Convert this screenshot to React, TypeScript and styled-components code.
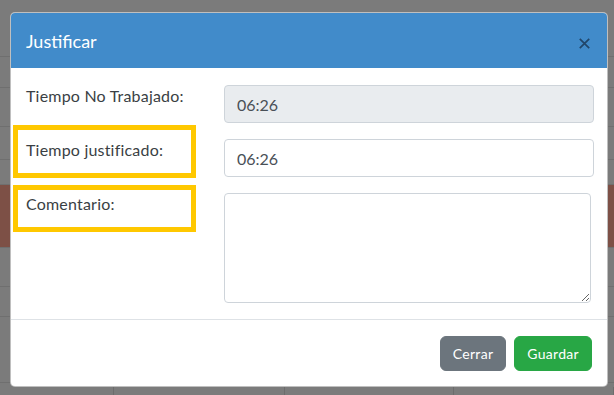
import React from 'react'
import styled, { createGlobalStyle } from 'styled-components'

const GlobalStyle = createGlobalStyle`
  html, body {
    margin: 0;
    padding: 0;
    background: #7b7b7b;
    font-family: Lato, 'Open Sans', sans-serif;
  }
  * {
    box-sizing: border-box;
  }
`

// rows of the page that sits behind the backdrop
const bgRows = [
  { h: 57 },
  { h: 31 },
  { h: 39 },
  { h: 33 },
  { h: 25 },
  { h: 63, red: true },
  { h: 39 },
  { h: 30 },
  { h: 66 },
]

const App: React.FC = () => (
  <>
    <GlobalStyle />
    <Page>
      <BgTable>
        {bgRows.map((row, i) => (
          <BgRow key={i} $height={row.h} $red={row.red} />
        ))}
        <BgCells>
          <BgCell $width={114} />
          <BgCell $width={171} />
          <BgCell $width={169} />
          <BgCell $width={160} />
        </BgCells>
      </BgTable>

      <Modal>
        <Header>
          <Title>Justificar</Title>
          <CloseButton aria-label="Close">
            <svg width="11" height="11" viewBox="0 0 11 11">
              <path d="M0.8 0.8 L10.2 10.2 M10.2 0.8 L0.8 10.2" stroke="#21466a" strokeWidth="1.7" fill="none" />
            </svg>
          </CloseButton>
        </Header>

        <Body>
          <Label>Tiempo No Trabajado:</Label>
          <Input value="06:26" disabled readOnly />

          <Label $boxed $boxTop={-13} $boxHeight={43}>Tiempo justificado:</Label>
          <Input defaultValue="06:26" />

          <Label $boxed $boxTop={-7} $boxHeight={37}>Comentario:</Label>
          <TextArea />
        </Body>

        <Footer>
          <Button $color="#6c757d">Cerrar</Button>
          <Button $color="#28a745">Guardar</Button>
        </Footer>
      </Modal>
    </Page>
  </>
)

export default App

const Page = styled.div`
  position: relative;
  width: 614px;
  height: 395px;
  overflow: hidden;
`
const BgTable = styled.div`
  display: flex;
  flex-direction: column;
`
const BgRow = styled.div<{ $height: number; $red?: boolean }>`
  height: ${(p) => p.$height}px;
  background: ${(p) => (p.$red ? '#7d5046' : '#7b7b7b')};
  border-bottom: 1px solid #6f6f6f;
`
const BgCells = styled.div`
  display: flex;
  height: 20px;
`
const BgCell = styled.div<{ $width: number }>`
  width: ${(p) => p.$width}px;
  border-right: 1px solid #6c6c6c;
  margin-top: 4px;
`
const Modal = styled.div`
  position: absolute;
  top: 12px;
  left: 10px;
  width: 598px;
  background: #fff;
  border: 1px solid rgba(0, 0, 0, 0.25);
  border-radius: 5px;
  overflow: hidden;
`
const Header = styled.div`
  display: flex;
  align-items: center;
  justify-content: space-between;
  height: 55px;
  padding: 0 17px 0 15px;
  background: #418bca;
`
const Title = styled.h5`
  margin: 0;
  font-size: 18px;
  font-weight: 400;
  line-height: 24px;
  color: #fff;
`
const CloseButton = styled.button`
  display: flex;
  padding: 0;
  margin-top: 5px;
  border: 0;
  background: transparent;
  cursor: pointer;
`
const Body = styled.div`
  display: grid;
  grid-template-columns: 198px 1fr;
  row-gap: 16px;
  padding: 17px 13px 16px 15px;
  border-bottom: 1px solid #dee2e6;
`
const Label = styled.label<{ $boxed?: boolean; $boxTop?: number; $boxHeight?: number }>`
  position: relative;
  margin-top: -1px;
  font-size: 16px;
  line-height: 24px;
  letter-spacing: 0.2px;
  color: #3a3f44;

  &::after {
    content: '';
    display: ${(p) => (p.$boxed ? 'block' : 'none')};
    position: absolute;
    left: -13px;
    right: 28px;
    top: ${(p) => p.$boxTop ?? 0}px;
    height: ${(p) => p.$boxHeight ?? 0}px;
    border: 5px solid #ffc800;
  }
`
const Input = styled.input`
  width: 100%;
  height: 38px;
  padding: 6px 12px;
  font-family: inherit;
  font-size: 16px;
  line-height: 24px;
  color: #495057;
  background: #fff;
  border: 1px solid #ced4da;
  border-radius: 4px;
  outline: none;

  &:disabled {
    background: #e9ecef;
    color: #495057;
    -webkit-text-fill-color: #495057;
    opacity: 1;
  }
`
const TextArea = styled.textarea`
  width: 367px;
  height: 110px;
  padding: 6px 12px;
  font-family: inherit;
  font-size: 16px;
  color: #495057;
  border: 1px solid #ced4da;
  border-radius: 4px;
  outline: none;
`
const Footer = styled.div`
  display: flex;
  justify-content: flex-end;
  gap: 8px;
  padding: 16px 15px 15px;
`
const Button = styled.button<{ $color: string }>`
  height: 35px;
  padding: 0 12px;
  font-family: inherit;
  font-size: 14px;
  line-height: 21px;
  letter-spacing: 0.3px;
  color: #fff;
  background: ${(p) => p.$color};
  border: 1px solid ${(p) => p.$color};
  border-radius: 6px;
  cursor: pointer;
`
